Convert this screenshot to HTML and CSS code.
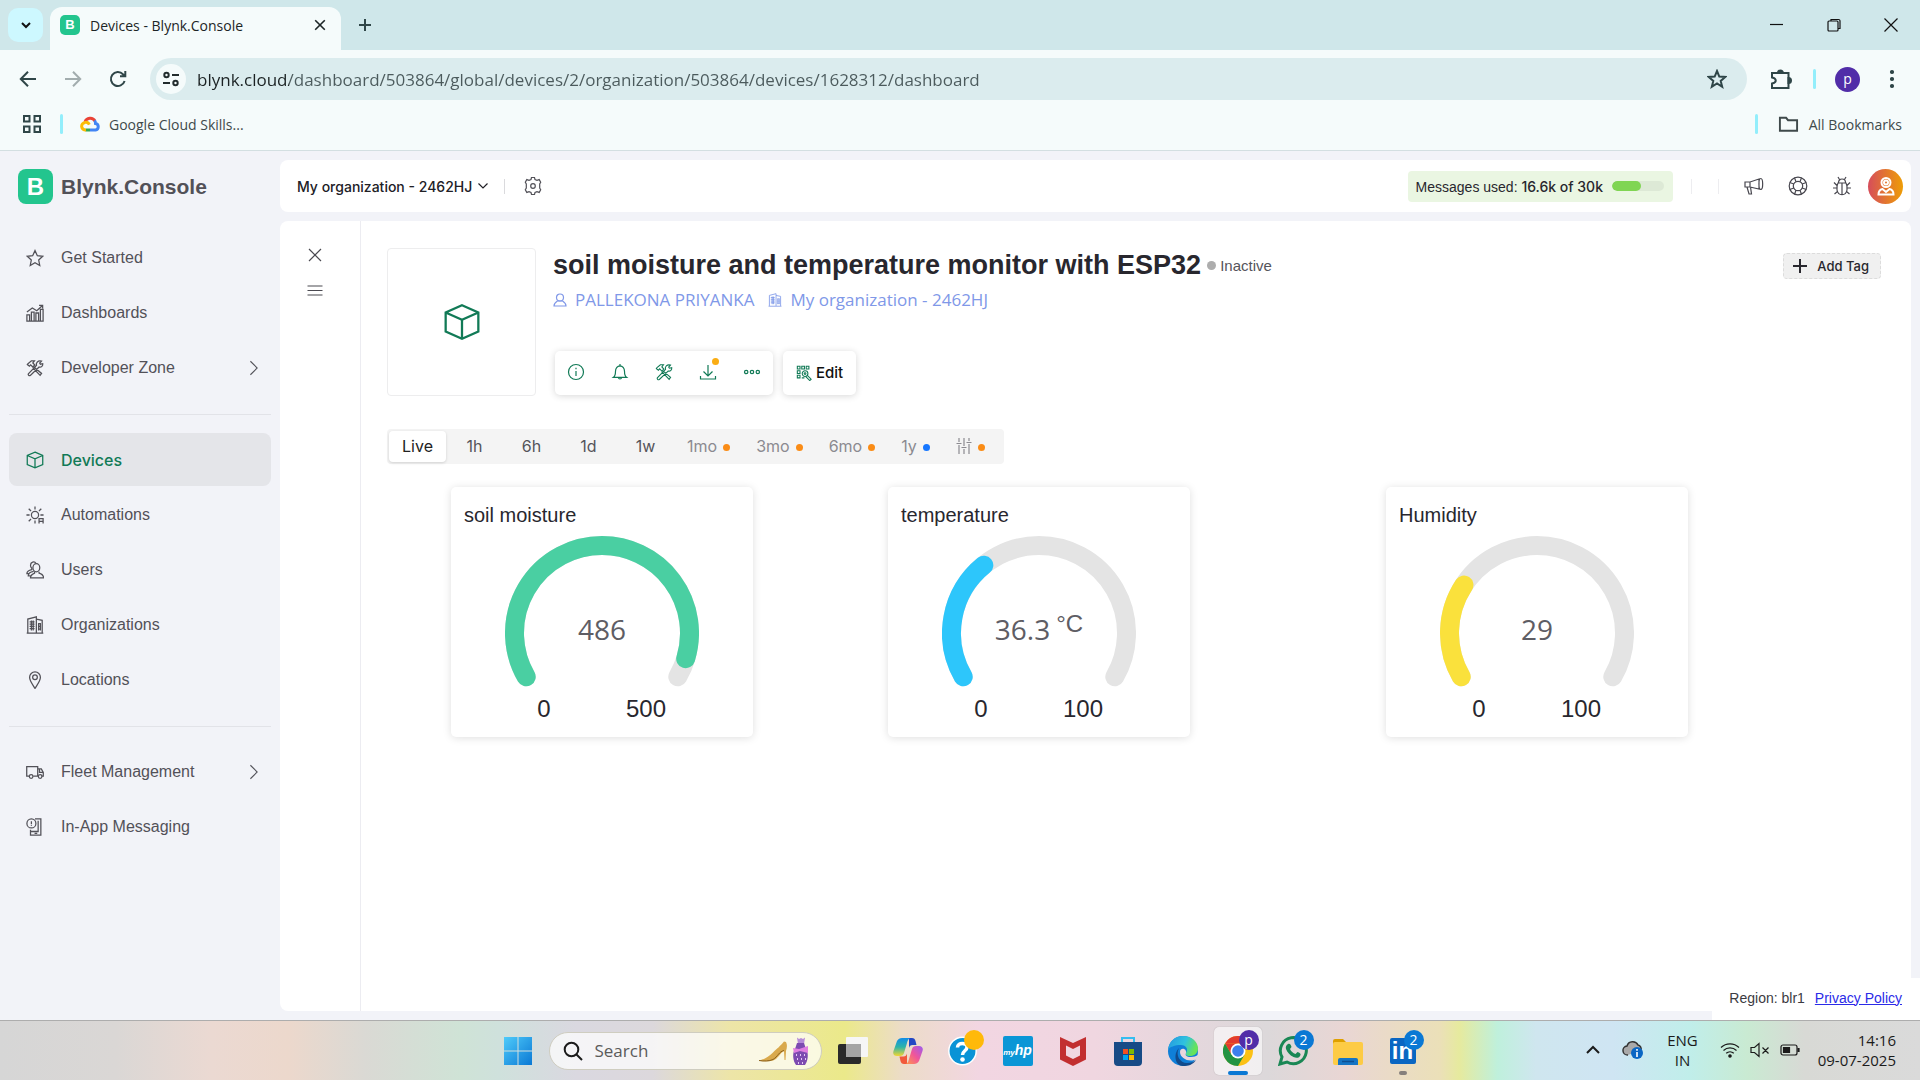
FILE: index.html
```html
<!DOCTYPE html>
<html lang="en">
<head>
<meta charset="utf-8">
<meta name="viewport" content="width=device-width, initial-scale=1">
<title>Devices - Blynk.Console</title>
<link rel="stylesheet" href="styles.css">
</head>
<body>
<svg class="sprite" aria-hidden="true">
  <symbol id="cube" viewBox="0 0 20 20"><path d="M10 1.2 18.6 5v10L10 18.8 1.4 15V5zM1.4 5 10 8.8 18.6 5M10 8.8v10"/></symbol>
  <symbol id="tools" viewBox="0 0 20 20"><path d="M2.2 5.2 6 2h3.4L7.600 4.400l2.200 2.300-2.200 2.200L5.200 6.500 3.800 8 1.500 6.200zM8.800 8.800l8.500 7.200-1.600 2.200L7.500 9.700M17.200 2.300l-2 2.200.8 1.300 2.600-.6c.4 2.500-1.500 4.300-4 3.700L4.800 18.300c-1.500.8-2.800-.6-2.200-1.900L11.700 7.100c-1-2.700 1.500-5.900 5.500-4.800z"/></symbol>
  <symbol id="building" viewBox="0 0 20 20"><path d="M.8 18.900h18.400M2 18.500V3.400L11.500 1v17.500M11.500 3.500 18 4.800v13.700M4 6.500h5.500M4 9h5.500M4 11.500h5.500M4 14h5.500M6 5v11M8 5v11M14 8v8M16 8v8M13.500 8.500h3M13.500 11.500h3M13.500 14.500h3"/></symbol>
  <symbol id="chev-r" viewBox="0 0 20 20"><path d="m6 2.500 7.500 7.500L6 17.500"/></symbol>
  <symbol id="x" viewBox="0 0 20 20"><path d="m4 4 12 12M16 4 4 16"/></symbol>
</svg>

<header class="browser">
  <div class="tabstrip">
    <button class="tab-search" aria-label="Search tabs"><svg viewBox="0 0 12 12" class="ico i12 s2"><path d="m2 4 4 4 4-4"/></svg></button>
    <div class="tab">
      <span class="favicon">B</span>
      <span class="tab-title">Devices - Blynk.Console</span>
      <button class="plain" aria-label="Close tab"><svg class="ico i16 s2"><use href="#x"/></svg></button>
    </div>
    <button class="plain new-tab" aria-label="New tab"><svg viewBox="0 0 14 14" class="ico i14 s2"><path d="M7 1v12M1 7h12"/></svg></button>
    <div class="window-buttons">
      <button class="plain" aria-label="Minimize"><svg viewBox="0 0 16 16" class="ico i16"><path d="M1 7.500h13"/></svg></button>
      <button class="plain" aria-label="Restore"><svg viewBox="0 0 16 16" class="ico i16"><rect x="2" y="4" width="10" height="10" rx="1"/><path d="M5 4V2.500h7.500a1.500 1.500 0 0 1 1.500 1.500v7.500h-2"/></svg></button>
      <button class="plain" aria-label="Close"><svg viewBox="0 0 16 16" class="ico i16"><path d="m1.500 1.500 13 13M14.500 1.500l-13 13"/></svg></button>
    </div>
  </div>
  <div class="toolbar">
    <button class="plain nav" aria-label="Back"><svg viewBox="0 0 18 18" class="ico i18 s2"><path d="M17 9H2M9 1.800 1.800 9 9 16.200"/></svg></button>
    <button class="plain nav muted" aria-label="Forward"><svg viewBox="0 0 18 18" class="ico i18 s2"><path d="M1 9h15M9 1.800 16.200 9 9 16.200"/></svg></button>
    <button class="plain nav" aria-label="Reload"><svg viewBox="0 0 18 18" class="ico i18 s2"><path d="M15.600 11A7 7 0 1 1 14 4.200l2 2M16.300 1v5.300H11"/></svg></button>
    <div class="address">
      <button class="site-info" aria-label="Site information"><svg viewBox="0 0 18 18" class="ico i18 s2"><circle cx="4.500" cy="5" r="2.200"/><path d="M10 5h7M1 13h7"/><circle cx="13.500" cy="13" r="2.200"/></svg></button>
      <input class="url" type="text" aria-label="Address" value="blynk.cloud/dashboard/503864/global/devices/2/organization/503864/devices/1628312/dashboard">
      <button class="plain" aria-label="Bookmark this page"><svg viewBox="0 0 20 20" class="ico i20 s2"><path d="m10 2 2.300 5.600 6 .4-4.600 3.900 1.500 5.900L10 14.500l-5.200 3.300 1.500-5.900L1.700 8l6-.4z"/></svg></button>
    </div>
    <button class="plain ext" aria-label="Extensions"><svg viewBox="0 0 22 22" class="ico i22 s2"><path d="M2 5h16.500v15H2v-4.500c5-.8 5-5 0-6z"/><path class="fill" d="M8 5a2.500 2.500 0 0 1 5 0zM18.500 10a2.500 2.500 0 0 1 0 5z"/></svg></button>
    <span class="bar"></span>
    <button class="profile" aria-label="Profile">p</button>
    <button class="plain kebab" aria-label="Menu"><svg viewBox="0 0 6 20" class="ico kebab-ico"><circle class="fill" cx="3" cy="3" r="1.500"/><circle class="fill" cx="3" cy="10" r="1.500"/><circle class="fill" cx="3" cy="17" r="1.500"/></svg></button>
  </div>
  <div class="bookmarks">
    <button class="plain" aria-label="Apps"><svg viewBox="0 0 20 20" class="ico i20 s2"><path d="M2 2h5.500v5.500H2zM12.500 2H18v5.500h-5.500zM2 12.500h5.500V18H2zM12.500 12.500H18V18h-5.500z"/></svg></button>
    <span class="bar"></span>
    <a class="bookmark" href="#">
      <svg viewBox="0 0 20 16" class="gcloud"><path d="M5 6a5.500 5.500 0 0 1 10-1" stroke="#ea4335"/><path d="M14.500 4.500c1 1 1 2 1 3a3.300 3.300 0 0 1 0 6.500H10" stroke="#4285f4"/><path d="M10 14H5.500" stroke="#34a853"/><path d="M6 14a3.800 3.800 0 0 1-1-7.600c2-.4 3.500.6 4.300 2.200" stroke="#fbbc05"/></svg>
      Google Cloud Skills...</a>
    <span class="bar push"></span>
    <a class="bookmark all" href="#"><svg viewBox="0 0 22 18" class="ico folder s2"><path d="M2 15V2.500h6.500l2 2.500H20v11H2z"/></svg>All Bookmarks</a>
  </div>
</header>

<div class="app">
  <aside class="sidebar">
    <a class="brand" href="#"><span class="brand-mark">B</span><span>Blynk.Console</span></a>
    <nav class="menu" aria-label="Main">
      <a href="#"><svg viewBox="0 0 20 20" class="ico i18"><path d="m10 1.800 2.600 5.600 6 .7-4.500 4.200 1.200 6L10 15.300l-5.300 3 1.200-6L1.400 8.100l6-.7z"/></svg><span>Get Started</span></a>
      <a href="#"><svg viewBox="0 0 20 20" class="ico i18"><path d="M1 19v-7h3v7zM6 19V9h3v10zM11 19v-9h3v9zM16 19V6h3v13zM.500 19h19M1 9l6-4.500 5 3L18 2M14.500 1.500H18.500V5"/></svg><span>Dashboards</span></a>
      <a href="#"><svg class="ico i18"><use href="#tools"/></svg><span>Developer Zone</span><svg class="ico i18 end"><use href="#chev-r"/></svg></a>
      <hr>
      <a href="#" class="active" aria-current="page"><svg class="ico i18"><use href="#cube"/></svg><span>Devices</span></a>
      <a href="#"><svg viewBox="0 0 20 20" class="ico i18"><circle cx="10" cy="10" r="4"/><path d="M10 .5v3.500M10 16v3.500M.500 10H4M16 10h3.500M3 3l2.600 2.600M17 3l-2.600 2.600M3 17l2.600-2.600M14.500 19.500V14h4.500v5.500M14.500 17h4.500"/></svg><span>Automations</span></a>
      <a href="#"><svg viewBox="0 0 20 20" class="ico i18"><ellipse cx="11.500" cy="7.500" rx="3.800" ry="4.500"/><path d="M9.500 12v1.500c-2 .8-4.500 1.500-4.500 5.200h14.500c0-3.700-2.500-4.400-5-5.200V12M11 2.500C9.500 0 5 1 5 4.800c0 1.700.5 2.700 1.500 3.400v1.300c-3 .5-5.500 1.500-5.500 4.500h3M8.500 11.500c-3.500.5-6 1.500-6 5h2.500"/></svg><span>Users</span></a>
      <a href="#"><svg class="ico i18"><use href="#building"/></svg><span>Organizations</span></a>
      <a href="#"><svg viewBox="0 0 20 20" class="ico i18"><path d="M10 19.300C7 14.500 4 11 4 7a6 6 0 0 1 12 0c0 4-3 7.500-6 12.300z"/><circle cx="10" cy="7" r="2.600"/></svg><span>Locations</span></a>
      <hr>
      <a href="#"><svg viewBox="0 0 20 20" class="ico i18"><path d="M3.500 14.500H.800V4H13v10.500H8M13 6.500h4l2.200 4v4h-1.700M15 6.500v4h4"/><circle cx="5.700" cy="15" r="2"/><circle cx="15.700" cy="15" r="2"/></svg><span>Fleet Management</span><svg class="ico i18 end"><use href="#chev-r"/></svg></a>
      <a href="#"><svg viewBox="0 0 20 20" class="ico i18"><circle cx="6" cy="6" r="5"/><path d="M6 3.500v3.500M6 8v1M10 1h6.500v18H5v-6M13.500 3v12H5M9.500 17h3"/></svg><span>In-App Messaging</span></a>
    </nav>
  </aside>

  <main class="workspace">
    <div class="topbar">
      <button class="org">My organization - 2462HJ <svg viewBox="0 0 10 10" class="ico i10"><path d="m.5 2.500 4.500 4.500 4.500-4.500"/></svg></button>
      <span class="rule"></span>
      <button class="plain gear" aria-label="Settings"><svg viewBox="0 0 20 20" class="ico i20"><circle cx="10" cy="10" r="2.300"/><path d="m8.500 1.500-.5 2-2 .9-2.200-.8-1.500 2.600 1 1.800v4l-1 1.800 1.500 2.600 2.200-.8 2 .9.500 2h3l.5-2 2-.9 2.200.8 1.500-2.600-1-1.800V8l1-1.800-1.500-2.600-2.200.8-2-.9-.5-2z"/></svg></button>
      <div class="usage"><span>Messages used: <b>16.6k of 30k</b></span><span class="meter"><span class="meter-fill" style="width:55%"></span></span></div>
      <span class="rule faint"></span>
      <span class="rule faint"></span>
      <div class="top-icons">
        <button class="plain" aria-label="News"><svg viewBox="0 0 20 20" class="ico i20"><path d="M1 6h5l9-3v10l-9-2H1zM6 6v5M3 11l2 7h2.500L6.500 11M16.800 2.500c2.500 0 2.500 11 0 11s-2.500-11 0-11z"/></svg></button>
        <button class="plain" aria-label="Help"><svg viewBox="0 0 20 20" class="ico i20"><circle cx="10" cy="10" r="8.800"/><circle cx="10" cy="10" r="4.700"/><path d="m5.800 8-4-1.500M8 5.800 6.500 1.800M12 5.800l1.500-4M14.200 8l4-1.500M14.200 12l4 1.500M12 14.200l1.500 4M8 14.200l-1.500 4M5.800 12l-4 1.500"/></svg></button>
        <button class="plain" aria-label="Report a bug"><svg viewBox="0 0 20 20" class="ico i20"><path d="M6 7h8c1 2 1.500 4 1 7-.6 3-2.500 4.700-5 4.700S5.600 17 5 14c-.5-3 0-5 1-7zM6.500 6.500a3.500 3.500 0 0 1 7 0M10 7v11.500M7.500 3.500 6 1M12.500 3.500 14 1M5 9.500 2 6.500M15 9.500l3-3M4.800 12H1M15.200 12H19M5.500 15.500 2.500 18M14.500 15.500l3 2.500"/></svg></button>
      </div>
      <button class="account" aria-label="Account"><svg viewBox="0 0 20 20" class="ico i20 s2"><circle cx="10" cy="6.500" r="4.500"/><circle cx="10" cy="6.500" r="2"/><path d="M2.500 18.500c0-3 2-5 4-5.500l3.500 3 3.500-3c2 .5 4 2.500 4 5.500z"/></svg></button>
    </div>

    <section class="panel">
      <div class="rail">
        <button class="plain" aria-label="Close panel"><svg class="ico i20"><use href="#x"/></svg></button>
        <button class="plain" aria-label="Show list"><svg viewBox="0 0 20 20" class="ico i20"><path d="M2.500 5h15M2.500 9.500h15M2.500 14h15"/></svg></button>
      </div>
      <div class="device">
        <div class="summary">
          <div class="thumb"><svg class="ico i38"><use href="#cube"/></svg></div>
          <div class="info">
            <div class="title-row"><h1>soil moisture and temperature monitor with ESP32</h1><span class="status">Inactive</span></div>
            <div class="owner">
              <a href="#"><svg viewBox="0 0 14 14" class="ico i14"><circle cx="7" cy="4.500" r="3.500"/><path d="M1 13c0-3 2-4 3.500-5h5C11 9 13 10 13 13z"/></svg>PALLEKONA PRIYANKA</a>
              <a href="#"><svg class="ico i14"><use href="#building"/></svg>My organization - 2462HJ</a>
            </div>
            <div class="actions">
              <div class="action-group">
                <button class="plain" aria-label="Device info"><svg viewBox="0 0 18 18" class="ico i18"><circle cx="9" cy="9" r="7.500"/><path d="M9 8v5M9 4.700v1.500"/></svg></button>
                <button class="plain" aria-label="Notifications"><svg viewBox="0 0 18 18" class="ico i18"><path d="M2.500 14.300h13c-1.500-1-2-2.500-2-6 0-3-2-5.300-4.500-5.500-2.500.2-4.500 2.500-4.500 5.500 0 3.500-.5 5-2 6zM9 1v2M7.500 14.500c0 2 3 2 3 0"/></svg></button>
                <button class="plain" aria-label="Developer tools"><svg class="ico i18"><use href="#tools"/></svg></button>
                <button class="plain badge" aria-label="Download data"><svg viewBox="0 0 18 18" class="ico i18"><path d="M9 2v11M4.500 8.500 9 13l4.500-4.500M1.500 13v3h15v-3"/></svg></button>
                <button class="plain" aria-label="More"><svg viewBox="0 0 18 18" class="ico i18"><circle cx="3.200" cy="9" r="1.700"/><circle cx="9" cy="9" r="1.700"/><circle cx="14.800" cy="9" r="1.700"/></svg></button>
              </div>
              <button class="edit"><svg viewBox="0 0 18 18" class="ico i16"><path d="M1.500 1.500h3v3h-3zM6.500 1.500h3v3h-3zM11.500 1.500h3v3h-3zM1.500 6.500h3v3h-3zM1.500 11.500h3v3h-3zM6.500 14.500h3M12.500 11.500l4.500 4.500-1.500 1.500-4.500-4.500"/><circle cx="10.200" cy="9.700" r="3.200"/><circle cx="10.200" cy="9.700" r="1"/></svg>Edit</button>
            </div>
          </div>
          <button class="add-tag"><svg viewBox="0 0 16 16" class="ico i16 s2"><path d="M8 1v14M1 8h14"/></svg>Add Tag</button>
        </div>

        <div class="ranges" role="group" aria-label="Time range">
          <button class="on">Live</button><button>1h</button><button>6h</button><button>1d</button><button>1w</button>
          <button class="paid">1mo</button><button class="paid">3mo</button><button class="paid">6mo</button><button class="paid blue">1y</button>
          <button class="paid" aria-label="Custom range"><svg viewBox="0 0 16 16" class="ico i16"><path d="M3 0v4M3 7v9M0.500 5.500h5M8 0v8M8 11v5M5.500 9.500h5M13 0v3M13 6v10M10.500 4.500h5"/></svg></button>
        </div>

        <div class="widgets">
          <article class="card">
            <h2>soil moisture</h2>
            <div class="gauge">
              <svg viewBox="0 0 194 152"><path class="track" d="M21.200 140.800a87.500 87.500 0 1 1 151.600 0"/><path class="arc green" pathLength="100" stroke-dasharray="94.600 200" d="M21.200 140.800a87.500 87.500 0 1 1 151.600 0"/></svg>
              <span class="value">486</span>
            </div>
            <div class="limits"><span>0</span><span>500</span></div>
          </article>
          <article class="card">
            <h2>temperature</h2>
            <div class="gauge">
              <svg viewBox="0 0 194 152"><path class="track" d="M21.200 140.800a87.500 87.500 0 1 1 151.600 0"/><path class="arc sky" pathLength="100" stroke-dasharray="33.700 200" d="M21.200 140.800a87.500 87.500 0 1 1 151.600 0"/></svg>
              <span class="value">36.3<span class="unit">°C</span></span>
            </div>
            <div class="limits"><span>0</span><span>100</span></div>
          </article>
          <article class="card">
            <h2>Humidity</h2>
            <div class="gauge">
              <svg viewBox="0 0 194 152"><path class="track" d="M21.200 140.800a87.500 87.500 0 1 1 151.600 0"/><path class="arc yellow" pathLength="100" stroke-dasharray="26.400 200" d="M21.200 140.800a87.500 87.500 0 1 1 151.600 0"/></svg>
              <span class="value">29</span>
            </div>
            <div class="limits"><span>0</span><span>100</span></div>
          </article>
        </div>
      </div>
    </section>
  </main>
  <footer class="region"><span>Region: blr1</span><a href="#">Privacy Policy</a></footer>
</div>

<footer class="taskbar">
  <div class="dock">
    <button class="slot" aria-label="Start"><svg viewBox="0 0 30 30" class="i30"><defs><linearGradient id="win" x2="1" y2="1" gradientUnits="objectBoundingBox"><stop stop-color="#4fcbfa"/><stop offset="1" stop-color="#0a78d4"/></linearGradient></defs><path fill="url(#win)" d="M1 1h13.500v13.500H1zM15.500 1H29v13.500H15.500zM1 15.500h13.500V29H1zM15.500 15.500H29V29H15.500z"/></svg></button>
    <label class="search">
      <svg viewBox="0 0 20 20" class="ico i20 s2"><circle cx="8.500" cy="8.500" r="6.800"/><path d="m13.500 13.500 5.500 5.500"/></svg>
      <input type="text" placeholder="Search" aria-label="Search">
      <svg viewBox="0 0 52 30" class="promo"><path d="M1 24.500c5-1 10-4 14-8 4-4 7-6 11-11l2 .5c1.500 3 1 6 0 9l-.5 9h-1l-.5-9c-4 2-6 8-11 9.500-5 1.200-12 1-14 0z" fill="#d9a94c"/><path d="M1 24.500c5 .8 10 .8 14-1 5-3 6-8 11-9" stroke="#8a5f1c" fill="none"/><path d="M39 1.500 41 3l2-1 2 1 2-1.500-1 6.500h-6z" fill="#b58ad8"/><path d="M39 7h7l2 6c3 4 2 12-1 16h-9c-3-4-4-12-1-16z" fill="#7d4bb0"/><path d="m35 12 6 1 9-3v7l-8-2-6 2z" fill="#e07fe0"/><path d="M38 19h1m3 0h1m3 0h1m-8 4h1m3 0h1m3 0h1m-8 4h1m3 0h1" stroke="#e5c9f4" stroke-width="2"/></svg>
    </label>
    <button class="slot" aria-label="Task view"><svg viewBox="0 0 30 30" class="i30"><rect y="8" width="23" height="20" rx="2" fill="#2a2a2a"/><rect x="8" y="1" width="22" height="20" rx="1" fill="#f6f6f6"/><path d="M8 8h15v13H8z" fill="#a5a5a5"/></svg></button>
    <button class="slot" aria-label="Copilot"><svg viewBox="0 0 30 30" class="i30"><defs><linearGradient id="cpa" x2="0" y2="1"><stop stop-color="#118de8"/><stop offset=".5" stop-color="#2eb4a8"/><stop offset="1" stop-color="#f2d632"/></linearGradient><linearGradient id="cpb" x1="1" x2="0" y2="1"><stop stop-color="#9b5cf0"/><stop offset=".5" stop-color="#f0559a"/><stop offset="1" stop-color="#ff9a4a"/></linearGradient></defs><path fill="#2347c4" d="M16 2h3c2 0 3 1 3.500 3l1 4h-4c-2 0-3 1-3.500 3z"/><path fill="url(#cpa)" d="M9 2h8c-2 1-2.500 3-3 5l-3 10c-.5 2-2 3-4 3H4c-3 0-4.500-2-3.500-5L4 5c1-2 3-3 5-3z"/><path fill="#f15a3c" d="M14 28h-3c-2 0-3-1-3.500-3l-1-4.500h4c2 0 3-1 3.500-3z"/><path fill="url(#cpb)" d="M21 28h-8c2-1 2.500-3 3-5l3-10c.5-2 2-3 4-3h3c3 0 4.500 2 3.500 5L26 25c-1 2-3 3-5 3z"/></svg></button>
    <button class="slot" aria-label="Help"><svg viewBox="0 0 30 30" class="i30"><circle cx="14.500" cy="15" r="13.700" fill="#0a93d6" stroke="#fff" stroke-width="1.500"/><path d="M9.500 11.500c0-5.500 9.500-5 9.500-.5 0 4-4.500 3.500-4.500 8" fill="none" stroke="#fff" stroke-width="3.500"/><circle cx="14.500" cy="23.500" r="2.300" fill="#fff"/></svg><span class="dot gold"></span></button>
    <button class="slot" aria-label="myHP"><span class="myhp"><small>my</small>hp</span></button>
    <button class="slot" aria-label="McAfee"><svg viewBox="0 0 30 30" class="i30"><path fill="#c22f30" d="m2 1 13 6 13-6v22.500L15 30 2 23.500zm6 8.500v10l7 3.500 7-3.500v-10l-7 3.500z" fill-rule="evenodd"/></svg></button>
    <button class="slot" aria-label="Microsoft Store"><svg viewBox="0 0 30 30" class="i30"><path d="M9 6V2h12v4" fill="none" stroke="#35bdf0" stroke-width="2"/><path d="M1 6h28v20a4 4 0 0 1-4 4H5a4 4 0 0 1-4-4z" fill="#174b86"/><path fill="#f25022" d="M10 13h5v5h-5z"/><path fill="#7fba00" d="M16 13h5v5h-5z"/><path fill="#00a4ef" d="M10 19h5v5h-5z"/><path fill="#ffb900" d="M16 19h5v5h-5z"/></svg></button>
    <button class="slot" aria-label="Edge"><svg viewBox="0 0 30 30" class="i30"><defs><linearGradient id="edg" x2="1" y2=".3"><stop stop-color="#2496e0"/><stop offset=".6" stop-color="#2fc2df"/><stop offset="1" stop-color="#66e35a"/></linearGradient></defs><circle cx="15" cy="15" r="15" fill="#0f7fd8"/><path fill="url(#edg)" d="M0 14C1 5 7 0 15 0c9 0 15 6 15 12.500 0 5-4 7.500-8 7.500s-5-1.500-4-3c3-5-1-8-5-8-6 0-12 2-13 5z"/><path fill="#114a8b" d="M11 12c-4 7 1 15 8 15 4 0 7-1 9-3-3 5-8 6-13 6C7 30 5 18 11 12z"/><path fill="#e9d6dd" d="M18 17c-1 2 0 4 5 4 3 0 5-1 7-2-1 3-2 5-4 5-6 2-14-2-14-8 0-5 7-4 6 1z"/></svg></button>
    <button class="slot current" aria-label="Chrome"><svg viewBox="0 0 30 30" class="i30"><circle cx="15" cy="15" r="15" fill="#fbc116"/><path fill="#e33b2e" d="M2 7.500A15 15 0 0 1 28 7.500H15z"/><path fill="#e33b2e" d="m2 7.500 6.500 11.300L15 7.500z"/><path fill="#229342" d="M2 7.500a15 15 0 0 0 13 22.500l6.500-11.200h-13z"/><circle cx="15" cy="15" r="7.500" fill="#fff"/><circle cx="15" cy="15" r="5.800" fill="#3e7fee"/></svg><span class="dot violet">p</span></button>
    <button class="slot" aria-label="WhatsApp"><svg viewBox="0 0 30 30" class="i30"><path d="m2 28 2-7a13 13 0 1 1 5 5z" fill="none" stroke="#198754" stroke-width="3"/><path d="M10 8c2-1 3 1 3.500 3l-1.500 2c1 2.500 3 4 5.500 5l2-2c2 .5 3.500 1.500 3 3-1 3-4 3.500-7 2-4-2-6-4.500-7.500-8C7.500 11 8 9 10 8z" fill="#198754"/></svg><span class="dot azure">2</span></button>
    <button class="slot" aria-label="File Explorer"><svg viewBox="0 0 30 30" class="i30"><path fill="#dfa000" d="M0 5a2 2 0 0 1 2-2h8l3 3v6H0z"/><rect y="6" width="30" height="23" rx="2" fill="#fdcb45"/><path fill="#1574c4" d="M5 29v-5a2 2 0 0 1 2-2h16a2 2 0 0 1 2 2v5z"/><path d="M9 25.500h12" stroke="#0d4f93" stroke-width="1.500"/></svg></button>
    <button class="slot running" aria-label="LinkedIn"><span class="linkedin">in</span><span class="dot azure">2</span></button>
  </div>
  <div class="tray">
    <button class="plain" aria-label="Show hidden icons"><svg viewBox="0 0 16 16" class="ico i16 s2"><path d="m2 11 6-6 6 6"/></svg></button>
    <svg viewBox="0 0 22 20" class="cloud"><path d="M6 15a4.500 4.500 0 0 1-1-9 6 6 0 0 1 11-1 4 4 0 0 1 3 5" fill="#a9a9a9" stroke="#333" stroke-width="1.500"/><circle cx="15" cy="13" r="6" fill="#0a66c4"/><path d="M15 12v5M15 9v1.800" stroke="#fff" stroke-width="1.600"/></svg>
    <span class="lang">ENG<br>IN</span>
    <span class="status-icons">
      <svg viewBox="0 0 20 18" class="ico i20"><path d="M1 6.500a13 13 0 0 1 18 0M3.500 9.500a9.500 9.500 0 0 1 13 0M6.200 12.300a5.700 5.700 0 0 1 7.600 0"/><circle class="fill" cx="10" cy="15" r="1.200"/></svg>
      <svg viewBox="0 0 20 18" class="ico i20"><path d="M1 6.500h3.500L9 2.500v13L4.500 11.500H1zM12.500 6.500l6 6M18.500 6.500l-6 6"/></svg>
      <svg viewBox="0 0 20 18" class="ico i20"><rect x="1" y="4" width="16" height="10" rx="2"/><path class="fill" d="M3.500 6.500h6v5h-6zM18 7.500h1v3h-1z"/></svg>
    </span>
    <time class="clock" datetime="2025-07-09T14:16">14:16<br>09-07-2025</time>
  </div>
</footer>
</body>
</html>
```
FILE: styles.css
```css
* { box-sizing: border-box; }

body {
  margin: 0;
  min-height: 100vh;
  display: grid;
  grid-template-rows: auto 1fr auto;
  background: #f2f3f8;
  font-family: "Liberation Sans", sans-serif;
  font-size: 16px;
  color: #28272e;
}

button, input { font: inherit; color: inherit; border: 0; background: none; padding: 0; margin: 0; }
input { outline: 0; min-width: 0; }
a { color: inherit; text-decoration: none; }
.plain { display: grid; place-items: center; }
.sprite { position: absolute; width: 0; height: 0; }

/* Icons */
.ico { fill: none; stroke: currentColor; stroke-width: 1.2; flex: none; display: block; }
.ico.s2 { stroke-width: 2; }
.ico .fill { fill: currentColor; }
.i10 { width: 10px; height: 10px; }
.i12 { width: 12px; height: 12px; }
.i14 { width: 14px; height: 14px; }
.i16 { width: 16px; height: 16px; }
.i18 { width: 18px; height: 18px; }
.i20 { width: 20px; height: 20px; }
.i22 { width: 22px; height: 22px; }
.i30 { width: 30px; height: 30px; display: block; }
.i38 { width: 38px; height: 38px; }

/* Browser window */
.browser {
  font-family: "Open Sans", sans-serif;
  font-size: 14px;
  color: #2f4648;
  background: #f5fbfb;
  border-bottom: 1px solid #d3dfe1;
}
.tabstrip { display: flex; align-items: center; height: 50px; background: #cfe7ea; padding-left: 8px; }
.tab-search { width: 35px; height: 34px; border-radius: 10px; background: #cdf8ff; color: #111; display: grid; place-items: center; }
.tab {
  display: flex; align-items: center; align-self: flex-end;
  width: 291px; height: 43px; margin-left: 7px; padding: 0 13px 7px 10px;
  background: #f5fbfb; border-radius: 12px 12px 0 0; color: #1c2526;
}
.favicon { width: 20px; height: 20px; border-radius: 5px; background: #23c58e; color: #fff; font: bold 13px/20px "Liberation Sans", sans-serif; text-align: center; margin-right: 10px; }
.tab-title { flex: 1; white-space: nowrap; }
.new-tab { margin-left: 17px; }
.window-buttons { display: flex; margin: 0 1px 0 auto; color: #111; }
.window-buttons .plain { width: 57px; height: 50px; }
.toolbar { display: flex; align-items: center; height: 50px; padding: 8px 10px 0 5px; }
.nav { width: 45px; height: 42px; padding-bottom: 1px; }
.muted { color: #a2adae; }
.address { flex: 1; display: flex; align-items: center; height: 42px; margin-left: 10px; padding: 0 20px 0 6px; border-radius: 21px; background: #dbecee; }
.site-info { width: 30px; height: 30px; border-radius: 50%; background: #f5fbfb; color: #222c2d; display: grid; place-items: center; }
.url {
  flex: 1; margin-left: 11px; font-size: 17px; height: 30px;
  background: linear-gradient(90deg, #1b2223 92px, #4b5a5c 92px);
  -webkit-background-clip: text; background-clip: text; color: transparent; caret-color: #1b2223;
}
.bar { width: 3px; height: 20px; border-radius: 2px; background: #93eefb; }
.ext { width: 44px; height: 42px; margin: 0 10px 0 12px; }
.profile { width: 25px; height: 25px; margin: 0 14px 0 19px; border-radius: 50%; background: #512da8; color: #fff; font-size: 14px; line-height: 22px; }
.kebab { width: 36px; height: 42px; }
.kebab-ico { width: 6px; height: 20px; }
.bookmarks { display: flex; align-items: center; height: 50px; padding: 0 18px 2px 22px; }
.bookmarks .bar:not(.push) { margin: 0 17px 0 18px; }
.push { margin-left: auto; }
.bookmark { display: flex; align-items: center; gap: 9px; color: #3f4a4b; }
.bookmark.all { gap: 10px; margin-left: 20px; }
.gcloud { width: 20px; height: 16px; fill: none; stroke-width: 3; }
.folder { width: 21px; height: 18px; }

/* Console */
.app { position: relative; display: grid; grid-template-columns: 280px 1fr; padding: 9px 9px 9px 0; min-height: 0; }
.brand { display: flex; align-items: center; gap: 8px; margin: 9px 0 0 18px; font-size: 21px; font-weight: bold; color: #525158; }
.brand-mark { width: 35px; height: 35px; border-radius: 8px; background: #23c58e; color: #fff; font-size: 24px; line-height: 36px; text-align: center; }
.menu { display: flex; flex-direction: column; gap: 2px; margin: 27px 9px 0; color: #525158; }
.menu .ico { stroke-width: 1.4; }
.menu a { display: flex; align-items: center; gap: 17px; height: 53px; padding: 0 8px 0 17px; border-radius: 8px; }
.menu .active { background: #e4e5e9; color: #117a56; font: 500 16px "Inter", sans-serif; }
.menu .end { margin-left: auto; stroke-width: 1.2; }
.menu hr { width: 100%; height: 1px; border: 0; background: #e2e3e8; margin: 18px 0 16px; }

.workspace { display: grid; grid-template-rows: 52px 1fr; gap: 9px; min-width: 0; }
.topbar { display: flex; align-items: center; background: #fff; border-radius: 8px; padding: 0 8px 0 17px; }
.org { display: flex; align-items: center; gap: 6px; font: 500 14px "Inter", sans-serif; color: #212026; }
.rule { width: 1px; height: 15px; background: #dadadd; margin-left: 16px; }
.gear { margin-left: 18px; color: #525158; }
.usage { display: flex; align-items: center; gap: 9px; margin-left: auto; height: 31px; padding: 0 9px 0 8px; border-radius: 4px; background: #eaf6e2; font-size: 14px; white-space: nowrap; }
.usage b { font: 500 14px "Inter", sans-serif; }
.meter { width: 52px; height: 10px; border-radius: 5px; background: #dde9d6; overflow: hidden; }
.meter-fill { display: block; height: 100%; border-radius: 5px; background: #80d553; }
.rule.faint { background: #ededf0; margin-left: 18px; }
.rule.faint + .rule.faint { margin-left: 26px; }
.top-icons { display: flex; gap: 24px; margin: 0 16px 0 25px; color: #48474f; }
.account { width: 35px; height: 35px; border-radius: 50%; background: linear-gradient(90deg, #d64d5b, #ee9d06); color: #fff; display: grid; place-items: center; }

.panel { display: grid; grid-template-columns: 81px 1fr; background: #fff; border-radius: 8px; }
.rail { border-right: 1px solid #ececf1; display: flex; flex-direction: column; align-items: center; gap: 16px; padding: 24px 11px 0 0; color: #4b4a51; }
.device { padding: 27px 0 0 26px; min-width: 0; }
.summary { display: flex; align-items: flex-start; padding-right: 30px; }
.thumb { width: 149px; height: 148px; border: 1px solid #ededee; border-radius: 4px; display: grid; place-items: center; color: #117a56; flex: none; }
.info { flex: 1; margin-left: 17px; min-width: 0; }
.title-row { display: flex; align-items: center; gap: 6px; height: 34px; }
h1 { margin: 0; font-size: 27px; line-height: 34px; white-space: nowrap; }
.status { display: flex; align-items: center; gap: 4px; font-size: 15px; color: #55545b; }
.status::before { content: ""; width: 9px; height: 9px; border-radius: 50%; background: #adadad; }
.owner { display: flex; gap: 14px; margin-top: 5px; font: 17px/26px "Open Sans", sans-serif; color: #8098e8; }
.owner a { display: flex; align-items: center; gap: 8px; white-space: nowrap; }
.actions { display: flex; gap: 10px; margin: 38px 0 0 2px; }
.action-group, .edit { height: 44px; border-radius: 5px; background: #fff; box-shadow: 0 1px 7px rgb(0 0 0 / 16%); }
.action-group { display: flex; align-items: center; gap: 26px; width: 218px; padding: 0 12px 2px; color: #117a56; }
.badge { position: relative; }
.badge::after { content: ""; position: absolute; right: -2px; top: -5px; width: 7px; height: 7px; border-radius: 50%; background: #faad14; }
.edit { display: flex; align-items: center; gap: 4px; padding: 0 13px 1px; font: 500 15px "Inter", sans-serif; color: #111; }
.edit .ico { color: #117a56; }
.add-tag { display: flex; align-items: center; gap: 9px; height: 26px; margin-top: 5px; padding: 0 11px 0 8px; border: 1px dashed #dcdcdc; border-radius: 4px; background: #f0f0f0; font: 500 13px "Inter", sans-serif; }

.ranges { display: inline-flex; align-items: center; height: 35px; margin-top: 33px; padding: 2px 6px 2px 2px; border-radius: 4px; background: #f4f4f4; font: 16px "Inter", sans-serif; color: #55545b; }
.ranges button { height: 31px; width: 57px; padding-bottom: 2px; border-radius: 4px; }
.ranges .on { background: #fff; color: #222; box-shadow: 0 1px 3px rgb(0 0 0 / 15%); }
.ranges .paid { display: flex; align-items: center; gap: 6px; width: auto; padding: 0 13px 2px; color: #8b8a90; }
.paid::after { content: ""; width: 7px; height: 7px; margin-top: 3px; border-radius: 50%; background: #fa8c16; }
.paid.blue::after { background: #1677ff; }

.widgets { display: grid; grid-template-columns: 437fr 498fr 525fr; margin: 23px 0 0 64px; }
.card { width: 302px; height: 250px; border-radius: 5px; background: #fff; box-shadow: 0 1px 8px rgb(0 0 0 / 13%); padding: 17px 13px 0; }
.card h2 { margin: 0 0 9px; font-size: 20px; line-height: 23px; font-weight: 400; }
.gauge { display: grid; justify-items: center; }
.gauge svg { grid-area: 1 / 1; width: 194px; height: 152px; fill: none; stroke-width: 19; stroke-linecap: round; }
.track { stroke: #e4e4e4; }
.green { stroke: #4acfa2; }
.sky { stroke: #2dc6fb; }
.yellow { stroke: #fae13c; }
.value { grid-area: 1 / 1; align-self: center; padding-top: 34px; font: 28px/34px "Open Sans", sans-serif; color: #5e5d64; }
.unit { margin-left: 6px; font: 24px/24px "Liberation Sans", sans-serif; vertical-align: 8px; }
.limits { display: grid; grid-template-columns: 102px 102px; justify-content: center; text-align: center; margin-top: 7px; padding-right: 14px; font-size: 24px; line-height: 28px; }

/* Lies over the bottom right corner of the console */
.region { position: absolute; right: 0; bottom: 0; display: flex; gap: 10px; align-items: center; height: 42px; padding: 0 18px 3px 17px; border-radius: 4px 0 0; background: #fff; font-size: 14px; color: #3c3b42; }
.region a { color: #2b2be8; text-decoration: underline; }

/* Desktop taskbar */
.taskbar {
  display: grid; grid-template-columns: 1fr auto 1fr; align-items: center;
  height: 60px; border-top: 1px solid #adadad;
  font-family: "Open Sans", sans-serif; color: #1b1b1b;
  background: linear-gradient(90deg, #d6d6d6 0%, #dad7d5 6%, #ebd9d2 11%, #ecd8cc 15%, #dad9d4 19%, #cfe3d6 24%, #cfe1dc 26%, #dad8e0 30%, #dcd8dc 34%, #ede5a8 38%, #ebe98a 44%, #ecdcc8 47%, #f2d6e2 51%, #f0d6e0 57%, #dcd8da 66%, #e9d6d4 70%, #ebe0b8 75%, #e6ea9e 76%, #bff0dc 78%, #cfe6ef 80%, #cfe5f3 84%, #c0eeea 88%, #c9ead2 91%, #d8d9d5 94%, #dadada 100%);
}
.dock { grid-column: 2; display: flex; align-items: center; gap: 7px; }
.slot { position: relative; display: grid; place-items: center; width: 48px; height: 48px; border-radius: 5px; }
.search { display: flex; align-items: center; gap: 12px; width: 273px; height: 38px; padding: 0 11px 0 13px; border: 1px solid #cfcdc0; border-radius: 19px; background: rgb(255 255 255 / 72%); }
.search input { flex: 1; font-size: 17px; }
.search input::placeholder { color: #5b5b5b; }
.promo { width: 52px; height: 30px; }
.current { background: rgb(255 255 255 / 60%); box-shadow: 0 0 1px rgb(0 0 0 / 30%); }
.current::after, .running::after { content: ""; position: absolute; bottom: 0; width: 20px; height: 4px; border-radius: 2px; background: #0a78d4; }
.running::after { width: 8px; background: #857f7c; }
.dot { position: absolute; top: 3px; right: 3px; width: 20px; height: 20px; border-radius: 50%; color: #fff; font-size: 14px; line-height: 19px; text-align: center; }
.gold { background: #ffb90a; }
.violet { background: #512da8; }
.azure { background: #0a78d4; }
.myhp { width: 30px; height: 30px; border-radius: 2px; background: #0a96d6; color: #fff; font: italic bold 14px/28px "Liberation Sans", sans-serif; text-align: center; }
.myhp small { font-size: 8px; }
.linkedin { width: 26px; height: 26px; border-radius: 2px; background: #0a66c2; color: #fff; font: bold 24px/26px "Liberation Sans", sans-serif; text-align: center; }
.tray { display: flex; align-items: center; justify-content: flex-end; padding: 0 24px 2px 0; font-size: 15px; line-height: 20px; text-align: center; }
.cloud { width: 22px; height: 20px; margin: 0 23px 0 21px; }
.status-icons { display: flex; gap: 10px; margin: 0 18px 0 22px; }
.clock { text-align: right; }
```
